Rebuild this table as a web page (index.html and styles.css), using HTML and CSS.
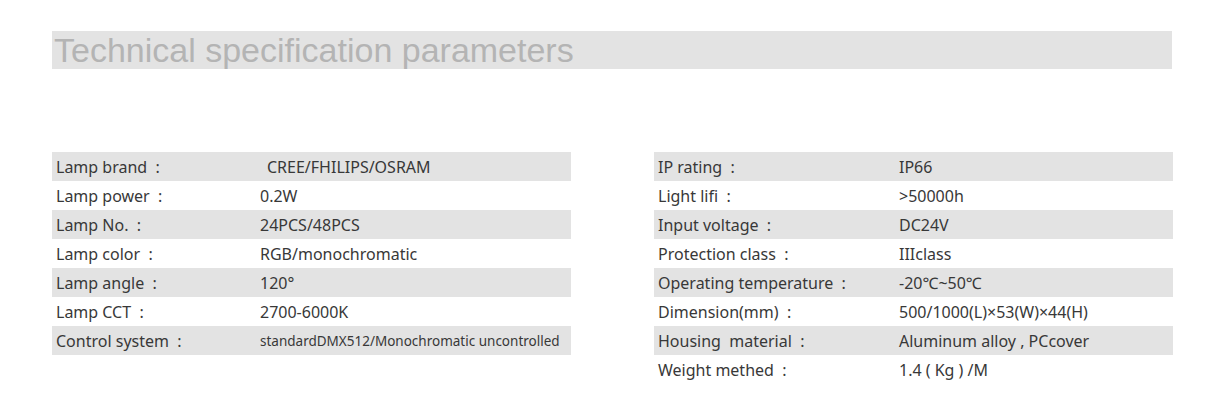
FILE: index.html
```html
<!DOCTYPE html>
<html lang="en">
<head>
<meta charset="utf-8">
<title>Technical specification parameters</title>
<link rel="stylesheet" href="styles.css">
</head>
<body>
<div class="page">
  <h2 class="title">Technical specification parameters</h2>
  <div class="tables">
    <div class="spec spec-left">
      <div class="row"><span class="k">Lamp brand&nbsp; :</span><span class="v v-indent">CREE/FHILIPS/OSRAM</span></div>
      <div class="row"><span class="k">Lamp power&nbsp; :</span><span class="v">0.2W</span></div>
      <div class="row"><span class="k">Lamp No.&nbsp; :</span><span class="v">24PCS/48PCS</span></div>
      <div class="row"><span class="k">Lamp color&nbsp; :</span><span class="v">RGB/monochromatic</span></div>
      <div class="row"><span class="k">Lamp angle&nbsp; :</span><span class="v">120°</span></div>
      <div class="row"><span class="k">Lamp CCT&nbsp; :</span><span class="v">2700-6000K</span></div>
      <div class="row"><span class="k">Control system&nbsp; :</span><span class="v v-small">standardDMX512/Monochromatic uncontrolled</span></div>
    </div>
    <div class="spec spec-right">
      <div class="row"><span class="k">IP rating&nbsp; :</span><span class="v">IP66</span></div>
      <div class="row"><span class="k">Light lifi&nbsp; :</span><span class="v">&gt;50000h</span></div>
      <div class="row"><span class="k">Input voltage&nbsp; :</span><span class="v">DC24V</span></div>
      <div class="row"><span class="k">Protection class&nbsp; :</span><span class="v">IIIclass</span></div>
      <div class="row"><span class="k">Operating temperature&nbsp; :</span><span class="v">-20℃~50℃</span></div>
      <div class="row"><span class="k">Dimension(mm)&nbsp; :</span><span class="v">500/1000(L)×53(W)×44(H)</span></div>
      <div class="row"><span class="k">Housing&nbsp; material&nbsp; :</span><span class="v">Aluminum alloy , PCcover</span></div>
      <div class="row"><span class="k">Weight methed&nbsp; :</span><span class="v">1.4 ( Kg ) /M</span></div>
    </div>
  </div>
</div>
</body>
</html>
```
FILE: styles.css
```css
html, body {
  margin: 0;
  padding: 0;
  background: #ffffff;
}

.page {
  padding: 31px 0 0 52px;
  width: 1122px;
}

.title {
  margin: 0;
  width: 1120px;
  height: 38px;
  background: #e3e3e3;
  color: #b4b4b4;
  font-family: "Liberation Sans", Arial, sans-serif;
  font-weight: normal;
  font-size: 34px;
  line-height: 38px;
  padding-left: 2px;
  box-sizing: border-box;
  white-space: nowrap;
}

.tables {
  margin-top: 83px;
  display: grid;
  grid-template-columns: 519px 519px;
  column-gap: 83px;
  align-items: start;
}

.spec {
  font-family: "Noto Sans", "Noto Sans CJK SC", sans-serif;
  font-size: 16px;
  color: #383838;
}

.row {
  display: grid;
  height: 29px;
  align-items: center;
  padding-left: 4px;
  white-space: nowrap;
}

.row:nth-child(odd) {
  background: #e3e3e3;
}

.spec-left .row {
  grid-template-columns: 204px 1fr;
}

.spec-right .row {
  grid-template-columns: 241px 1fr;
}

.v-indent {
  padding-left: 7px;
}

.v-small {
  font-size: 13.5px;
}
```
